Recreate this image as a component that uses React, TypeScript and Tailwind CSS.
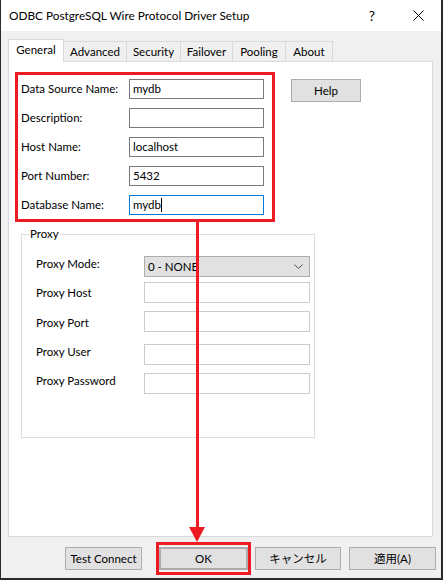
import React from 'react';

const tabs = [
  { label: 'General', w: 'w-[56px]', active: true },
  { label: 'Advanced', w: 'w-[63px]' },
  { label: 'Security', w: 'w-[54px]' },
  { label: 'Failover', w: 'w-[52px]' },
  { label: 'Pooling', w: 'w-[53px]' },
  { label: 'About', w: 'w-[47px]' },
];

const fields = [
  { label: 'Data Source Name:', value: 'mydb' },
  { label: 'Description:', value: '' },
  { label: 'Host Name:', value: 'localhost' },
  { label: 'Port Number:', value: '5432' },
  { label: 'Database Name:', value: 'mydb', focused: true },
];

const proxyLabels = [
  { label: 'Proxy Mode:', mt: 'mt-[21px]' },
  { label: 'Proxy Host', mt: 'mt-[13px]' },
  { label: 'Proxy Port', mt: 'mt-[14px]' },
  { label: 'Proxy User', mt: 'mt-[13px]' },
  { label: 'Proxy Password', mt: 'mt-[13px]' },
];

function Button({ children, className = '' }: { children: React.ReactNode; className?: string }) {
  return (
    <div className={`h-[23px] flex items-center justify-center bg-[#e1e1e1] border border-[#adadad] ${className}`}>
      {children}
    </div>
  );
}

export default function App() {
  return (
    <div className="relative w-[443px] h-[580px] flex flex-col bg-[#f0f0f0] border-l border-r-2 border-b-2 border-[#2b2b2b] text-black font-['Lato','Noto_Sans_CJK_JP',sans-serif] text-[11.5px] overflow-hidden">
      {/* Title bar */}
      <div className="h-[31px] shrink-0 bg-white flex items-center">
        <div className="flex-1 pl-[8px] text-[11.8px]">ODBC PostgreSQL Wire Protocol Driver Setup</div>
        <div className="w-[46px] h-full flex items-center justify-center text-[14px]">?</div>
        <div className="w-[46px] h-full flex items-center justify-center">
          <svg width="11" height="11" viewBox="0 0 11 11">
            <path d="M0.5 0.5 L10.5 10.5 M10.5 0.5 L0.5 10.5" stroke="#000" strokeWidth="1" fill="none" />
          </svg>
        </div>
      </div>

      <div className="pl-[7px] pt-[8px]">
        {/* Tabs */}
        <div className="flex items-end h-[22px]">
          {tabs.map((t) =>
            t.active ? (
              <div
                key={t.label}
                className={`${t.w} h-[23px] -mb-px relative z-10 bg-white border-l border-t border-r border-[#d9d9d9] flex items-center justify-center pb-[2px]`}
              >
                {t.label}
              </div>
            ) : (
              <div
                key={t.label}
                className={`${t.w} h-[20px] bg-[#f0f0f0] border-t border-r border-[#d9d9d9] flex items-center justify-center`}
              >
                {t.label}
              </div>
            )
          )}
        </div>

        {/* Panel */}
        <div className="w-[425px] h-[476px] bg-white border border-[#d9d9d9] pt-[17px] pl-[12px]">
          <div className="flex items-start">
            <div className="flex flex-col gap-[9px]">
              {fields.map((f) => (
                <div key={f.label} className="flex items-center h-[20px]">
                  <div className="w-[108px]">{f.label}</div>
                  <div
                    className={`w-[135px] h-[20px] flex items-center pl-[3px] border ${
                      f.focused ? 'border-[#0078d7]' : 'border-[#7a7a7a]'
                    }`}
                  >
                    {f.value}
                    {f.focused && <span className="w-px h-[14px] bg-black" />}
                  </div>
                </div>
              ))}
            </div>
            <Button className="ml-[27px] w-[70px]">Help</Button>
          </div>

          {/* Proxy group */}
          <div className="relative mt-[19px] w-[294px] h-[204px] border border-[#dcdcdc] flex">
            <div className="absolute left-[7px] top-[-9px] bg-white px-[1px] leading-[16px]">Proxy</div>
            <div className="w-[122px] pl-[14px] flex flex-col">
              {proxyLabels.map((p) => (
                <div key={p.label} className={`${p.mt} leading-[16px]`}>
                  {p.label}
                </div>
              ))}
            </div>
            <div className="flex flex-col">
              <div className="mt-[21px] w-[166px] h-[21px] bg-[#e1e1e1] border border-[#adadad] flex items-center justify-between pl-[3px] pr-[6px]">
                <span>0 - NONE</span>
                <svg width="9" height="5" viewBox="0 0 9 5">
                  <path d="M0.5 0.5 L4.5 4.5 L8.5 0.5" stroke="#555" strokeWidth="1" fill="none" />
                </svg>
              </div>
              <div className="mt-[5px] w-[166px] h-[21px] border border-[#cccccc]" />
              <div className="mt-[8px] w-[166px] h-[21px] border border-[#cccccc]" />
              <div className="mt-[12px] w-[166px] h-[21px] border border-[#cccccc]" />
              <div className="mt-[8px] w-[166px] h-[21px] border border-[#cccccc]" />
            </div>
          </div>
        </div>

        {/* Bottom buttons */}
        <div className="flex mt-[10px] pl-[57px]">
          <Button className="w-[77px]">Test Connect</Button>
          <Button className="ml-[17px] w-[89px] border-2 border-[#0078d7]">OK</Button>
          <Button className="ml-[7px] w-[86px]">キャンセル</Button>
          <Button className="ml-[8px] w-[87px]">適用(A)</Button>
        </div>
      </div>

      {/* Red annotation overlays */}
      <div className="absolute left-[14px] top-[72px] w-[260px] h-[150px] border-[3px] border-[#ed1c24] pointer-events-none" />
      <div className="absolute left-[195px] top-[222px] w-[3px] h-[306px] bg-[#ed1c24]" />
      <svg className="absolute left-[188px] top-[527px]" width="16" height="15" viewBox="0 0 16 15">
        <path d="M0 0 L16 0 L8 15 Z" fill="#ed1c24" />
      </svg>
      <div className="absolute left-[155px] top-[542px] w-[95px] h-[33px] border-[3px] border-[#ed1c24] pointer-events-none" />
    </div>
  );
}
